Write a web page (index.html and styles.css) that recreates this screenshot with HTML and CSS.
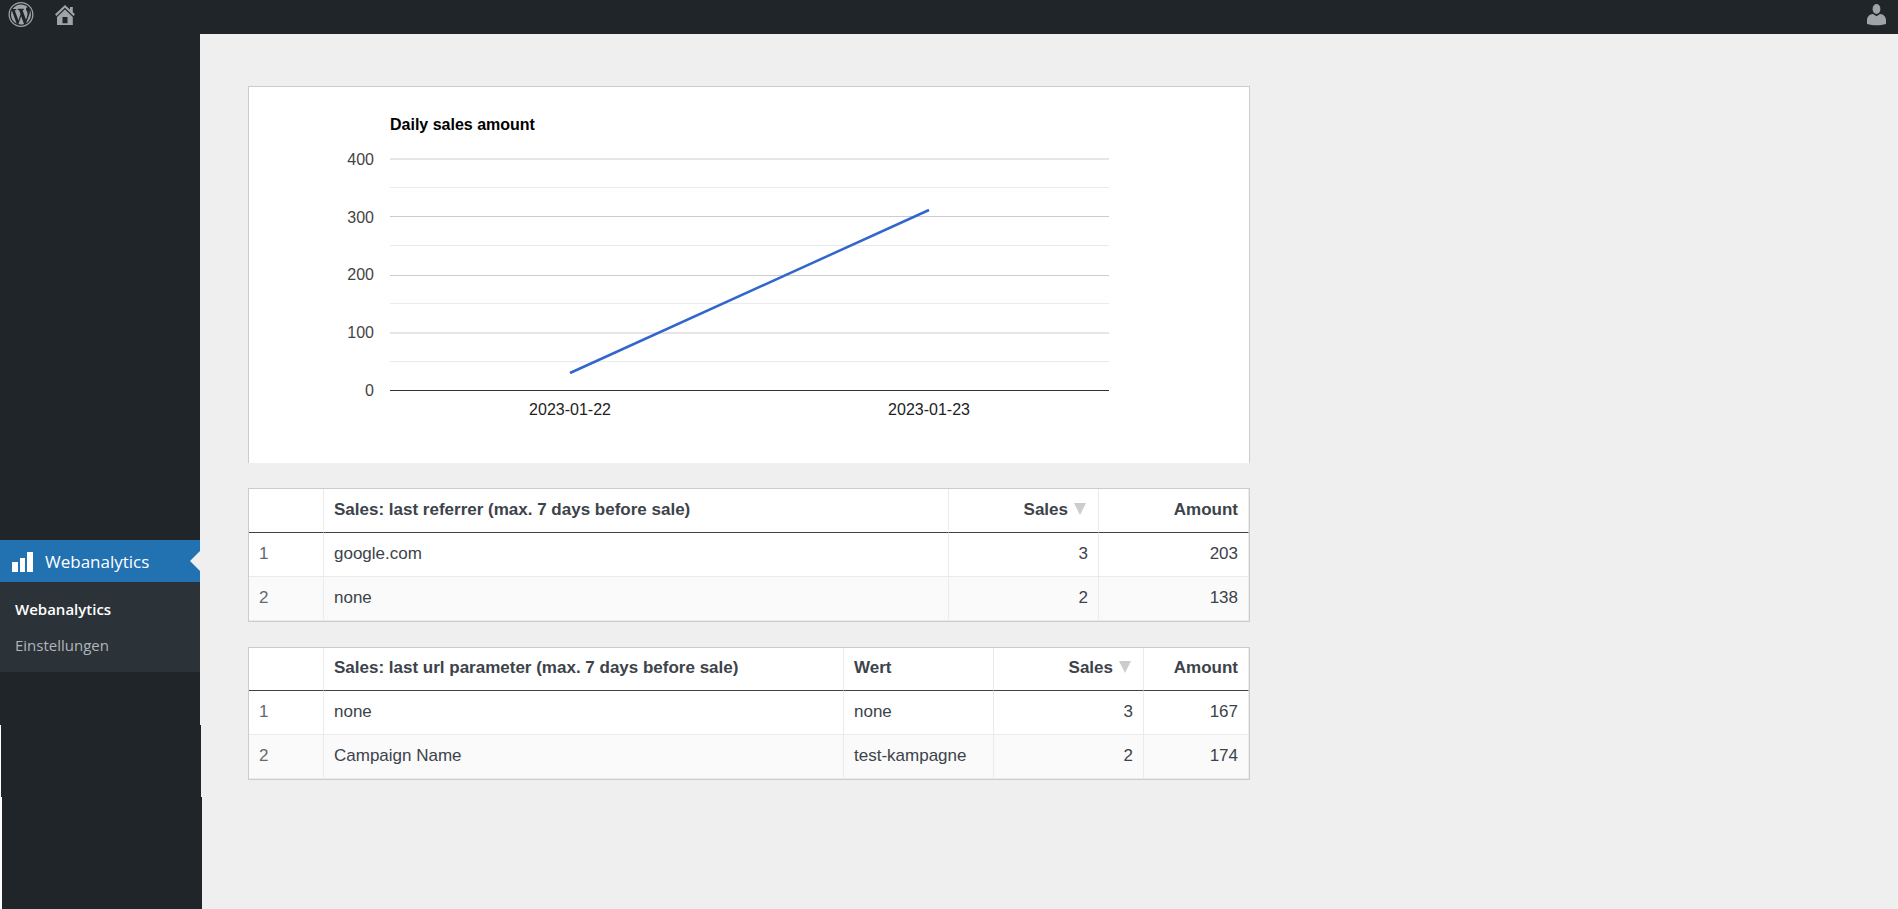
FILE: index.html
```
<!DOCTYPE html>
<html lang="de">
<head>
    <meta charset="UTF-8">
    <meta name="viewport" content="width=device-width, initial-scale=1.0">
    <title>Webanalytics</title>
    <link rel="stylesheet" href="styles.css">
</head>
<body>
    <header class="adminbar">
        <a href="#" aria-label="WordPress">
            <svg class="icon wp" viewBox="0 0 20 20"><path d="M20 10c0-5.51-4.49-10-10-10C4.48 0 0 4.49 0 10c0 5.52 4.48 10 10 10 5.51 0 10-4.48 10-10zM10 1.01c4.97 0 8.99 4.02 8.99 8.99s-4.02 8.99-8.99 8.99S1.01 14.97 1.01 10 5.03 1.01 10 1.01zM8.01 14.82L4.96 6.61c.49-.03 1.05-.08 1.05-.08.43-.05.38-1.01-.06-.99 0 0-1.29.1-2.13.1-.15 0-.33 0-.52-.01 1.44-2.17 3.9-3.6 6.7-3.6 2.09 0 3.99.79 5.41 2.09-.6-.08-1.45.35-1.45 1.42 0 .66.38 1.22.79 1.88.31.54.5 1.22.5 2.21 0 1.34-1.27 4.48-1.27 4.48l-2.71-7.5c.48-.03.75-.16.75-.16.43-.05.38-1.1-.05-1.08 0 0-1.3.11-2.14.11-.78 0-2.11-.11-2.11-.11-.43-.02-.48 1.06-.05 1.08l.84.08 1.12 3.04zm6.02 2.15L16.64 10s.67-1.69.39-3.81c.63 1.14.94 2.42.94 3.81 0 2.96-1.56 5.58-3.94 6.97zM2.68 6.77L6.5 17.25c-2.67-1.3-4.47-4.08-4.47-7.25 0-1.16.2-2.23.65-3.23zm7.45 4.53l2.29 6.25c-.75.27-1.57.42-2.42.42-.72 0-1.41-.11-2.06-.3z"/></svg>
        </a>
        <a href="#" aria-label="Website">
            <svg class="icon" viewBox="0 0 25 25"><path fill-rule="evenodd" d="M3 12.3L13 3l5 4.6V5h2.8v5.2l2.2 2.1-1.5 1.6L13 5.8l-8.500 8.100zM13 7.400l7.800 7.500V23H5v-8.100zM10.500 15v6.200h5V15z"/></svg>
        </a>
        <a href="#" class="account" aria-label="Profil">
            <svg class="icon" viewBox="0 0 25 25"><ellipse cx="12.5" cy="7" rx="3.900" ry="4.900"/><path d="M3 22v-4c0-3 2.500-6 6-6l3.500 2.300L16 12c3.500 0 6 3 6 6v4c-3 1-6 1.200-9.500 1.200S6 23 3 22z"/></svg>
        </a>
    </header>
    <div class="wrap">
        <nav class="sidebar">
            <div class="menu-space"></div>
            <a href="#" class="menu-top">
                <svg class="bars" viewBox="0 0 21 21"><path d="M0 11h6v10H0zM8 7h5v14H8zM15 1h6v20h-6z"/></svg>
                Webanalytics
            </a>
            <div class="submenu">
                <a href="#" class="current">Webanalytics</a>
                <a href="#">Einstellungen</a>
            </div>
            <div class="menu-gap"></div>
            <div class="menu-step"></div>
            <div class="menu-end"></div>
        </nav>
        <main class="content">
            <div class="chart">
                <svg viewBox="0 0 1000 376" role="img" aria-label="Daily sales amount">
                    <text class="chart-title" x="141" y="43">Daily sales amount</text>
                    <g class="grid-minor">
                        <path d="M141 100.5H860M141 158.5H860M141 216.5H860M141 274.5H860"/>
                    </g>
                    <g class="grid-major">
                        <path d="M141 72H860M141 129.5H860M141 188.5H860M141 246H860"/>
                    </g>
                    <path class="baseline" d="M141 303.5H860"/>
                    <g class="y-axis">
                        <text x="125" y="78">400</text>
                        <text x="125" y="136">300</text>
                        <text x="125" y="193">200</text>
                        <text x="125" y="251">100</text>
                        <text x="125" y="309">0</text>
                    </g>
                    <g class="x-axis">
                        <text x="321" y="328">2023-01-22</text>
                        <text x="680" y="328">2023-01-23</text>
                    </g>
                    <path class="line" d="M321 286L680 123"/>
                </svg>
            </div>

            <table>
                <colgroup>
                    <col class="col-nr"><col><col class="col-value"><col class="col-value">
                </colgroup>
                <thead>
                    <tr>
                        <th></th>
                        <th>Sales: last referrer (max. 7 days before sale)</th>
                        <th class="num" aria-sort="descending">Sales<span class="sort"></span></th>
                        <th class="num">Amount</th>
                    </tr>
                </thead>
                <tbody>
                    <tr>
                        <td class="nr">1</td>
                        <td>google.com</td>
                        <td class="num">3</td>
                        <td class="num">203</td>
                    </tr>
                    <tr>
                        <td class="nr">2</td>
                        <td>none</td>
                        <td class="num">2</td>
                        <td class="num">138</td>
                    </tr>
                </tbody>
            </table>

            <table class="params">
                <colgroup>
                    <col class="col-nr"><col><col class="col-value"><col class="col-value"><col class="col-amount">
                </colgroup>
                <thead>
                    <tr>
                        <th></th>
                        <th>Sales: last url parameter (max. 7 days before sale)</th>
                        <th>Wert</th>
                        <th class="num" aria-sort="descending">Sales<span class="sort"></span></th>
                        <th class="num">Amount</th>
                    </tr>
                </thead>
                <tbody>
                    <tr>
                        <td class="nr">1</td>
                        <td>none</td>
                        <td>none</td>
                        <td class="num">3</td>
                        <td class="num">167</td>
                    </tr>
                    <tr>
                        <td class="nr">2</td>
                        <td>Campaign Name</td>
                        <td>test-kampagne</td>
                        <td class="num">2</td>
                        <td class="num">174</td>
                    </tr>
                </tbody>
            </table>
        </main>
    </div>
</body>
</html>
```
FILE: styles.css
```
*{
    box-sizing: border-box;
}
body{
    margin: 0;
    min-height: 100vh;
    display: flex;
    flex-direction: column;
    background-color: #efefef;
    font-family: "Liberation Sans", Arial, sans-serif;
    font-size: 16px;
}
a{
    text-decoration: none;
}
.adminbar{
    display: flex;
    gap: 18px;
    height: 34px;
    padding: 2px 9px 0 8px;
    background-color: #1f2528;
}
.icon{
    display: block;
    width: 25px;
    height: 25px;
    fill: #9fa4a9;
}
.wp{
    width: 26px;
}
.account{
    margin-left: auto;
}
.wrap{
    flex: 1;
    display: flex;
}

/* sidebar */
.sidebar{
    position: relative;
    flex: none;
    display: flex;
    flex-direction: column;
    width: 200px;
    background-color: #fff;
    font-family: "Open Sans", "Noto Sans", sans-serif;
}
.menu-space, .menu-gap, .menu-step, .menu-end{
    background-color: #1f2528;
}
.menu-space{
    height: 506px;
}
.menu-top{
    position: relative;
    display: flex;
    align-items: center;
    gap: 12px;
    height: 42px;
    padding-left: 12px;
    background-color: #2271b1;
    color: #fff;
    font-size: 17px;
}
.menu-top::after{
    content: "";
    position: absolute;
    right: 0;
    top: 11px;
    border: 10px solid transparent;
    border-left: 0;
    border-right-color: #efefef;
}
.bars{
    width: 21px;
    height: 21px;
    fill: #fff;
}
.submenu{
    height: 90px;
    padding: 9px 15px;
    background-color: #2c3338;
}
.submenu a{
    display: block;
    color: #b0b5ba;
    font-size: 15px;
    line-height: 36px;
}
.submenu .current{
    color: #fff;
    font-weight: 600;
}
.menu-gap{
    height: 53px;
}
.menu-step{
    height: 72px;
    margin: 0 -1px 0 1px;
}
.menu-end{
    flex: 1;
    margin: 0 -2px 0 2px;
}

/* content */
.content{
    flex: 1;
    max-width: 1098px;
    padding: 52px 48px;
}
.chart{
    margin-bottom: 25px;
    border: 1px solid #ccc;
    border-bottom: 0;
    background-color: #fff;
}
.chart svg{
    display: block;
    width: 100%;
    font-size: 16px;
}
.chart-title{
    font-weight: bold;
}
.grid-minor{
    stroke: #ebebeb;
}
.grid-major{
    stroke: #ccc;
}
.baseline{
    stroke: #333;
}
.y-axis{
    fill: #444;
    text-anchor: end;
}
.x-axis{
    fill: #222;
    text-anchor: middle;
}
.line{
    fill: none;
    stroke: #3366cc;
    stroke-width: 2.5;
}

table{
    width: 100%;
    margin-bottom: 25px;
    table-layout: fixed;
    border: 1px solid #ccc;
    border-collapse: separate;
    border-spacing: 0;
    background-color: #fff;
    color: #3c434a;
    font-size: 17px;
}
.col-nr{
    width: 75px;
}
.col-value{
    width: 150px;
}
.col-amount{
    width: 105px;
}
th, td{
    height: 44px;
    padding: 0 10px 2px;
    border-right: 1px solid #ebebeb;
    border-bottom: 1px solid #ebebeb;
    text-align: left;
}
th{
    border-bottom-color: #3c434a;
}
.params th{
    height: 43px;
}
tbody tr:nth-child(even){
    background-color: #fafafa;
}
td.nr{
    color: #646970;
}
.num{
    text-align: right;
}
.sort{
    display: inline-block;
    margin: 0 2px 0 6px;
    border: 6px solid transparent;
    border-top: 12px solid #ccc;
    border-bottom: 0;
}
```
